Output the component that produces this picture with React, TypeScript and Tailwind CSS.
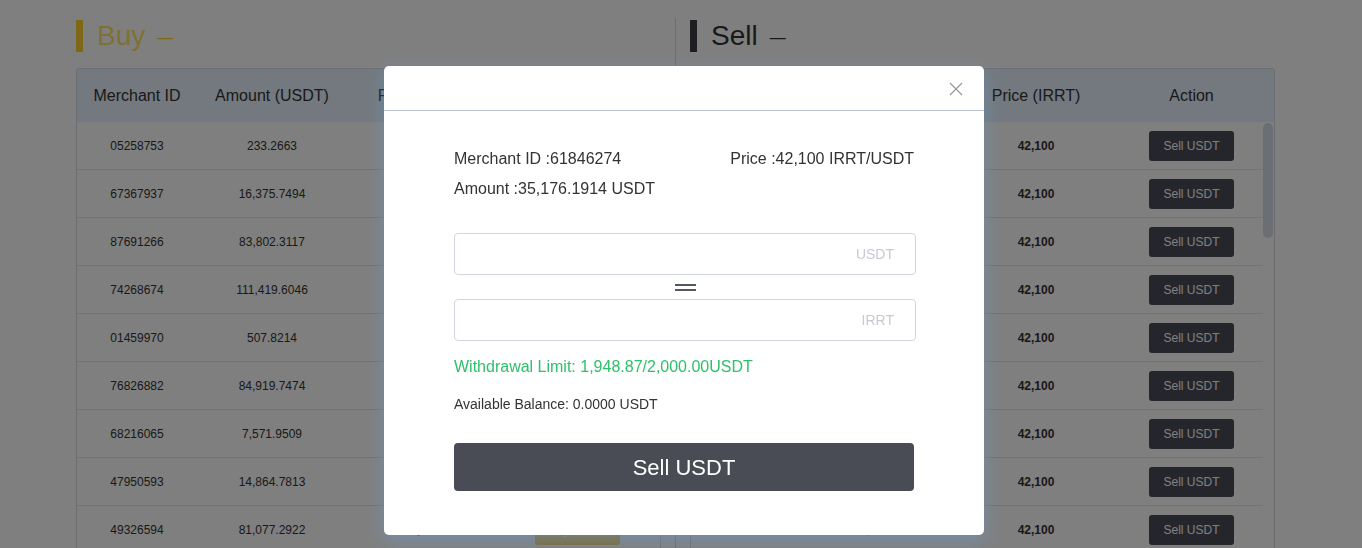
const font = { fontFamily: '"Liberation Sans", Arial, sans-serif' };

const rows = [
  ["05258753", "233.2663"],
  ["67367937", "16,375.7494"],
  ["87691266", "83,802.3117"],
  ["74268674", "111,419.6046"],
  ["01459970", "507.8214"],
  ["76826882", "84,919.7474"],
  ["68216065", "7,571.9509"],
  ["47950593", "14,864.7813"],
  ["49326594", "81,077.2922"],
];

function SideTitle({ label, tone }: { label: string; tone: "buy" | "sell" }) {
  const buy = tone === "buy";
  return (
    <div className="flex h-[68px] items-center pt-[3px]">
      <span className={`h-[32px] w-[7px] ${buy ? "bg-[#ffd12a]" : "bg-[#3c3d44]"}`} />
      <span className={`ml-[14px] text-[28px] leading-none ${buy ? "text-[#ffe35e]" : "text-[#333]"}`}>{label}</span>
      <span className={`ml-3 mt-1 text-[16px] leading-none ${buy ? "text-[#ffd12a]" : "text-[#333]"}`}>—</span>
    </div>
  );
}

function OrderTable({ tone }: { tone: "buy" | "sell" }) {
  const buy = tone === "buy";
  return (
    <div className="overflow-hidden rounded-t-[3px] border border-[#d5dde6]">
      <div className="flex h-[53px] items-center bg-[#e6f3fd] text-[16px] text-[#333]">
        <div className="w-[120px] text-center">Merchant ID</div>
        <div className="w-[150px] text-center">Amount (USDT)</div>
        <div className="w-[150px] text-center">Price (IRRT)</div>
        <div className="flex-1 pr-[2px] text-center">Action</div>
      </div>
      <div className="flex h-[500px]">
        <div className="flex-1">
          {rows.map(([id, amount]) => (
            <div key={id} className="flex h-[48px] items-center border-b border-[#e6e6e6] text-[12px] text-[#333]">
              <div className="w-[120px] text-center">{id}</div>
              <div className="w-[150px] text-center">{amount}</div>
              <div className="w-[150px] text-center font-bold">42,100</div>
              <div className="flex flex-1 justify-center pl-[9px]">
                <button
                  type="button"
                  className={`h-[30px] w-[85px] rounded-[3px] text-[12px] text-white ${buy ? "bg-[#f8d573]" : "bg-[#4a4c56]"}`}
                >
                  {buy ? "Buy USDT" : "Sell USDT"}
                </button>
              </div>
            </div>
          ))}
        </div>
        <div className="w-[11px] pt-[1px]">
          <div className="h-[115px] w-[10px] rounded-[5px] bg-[#d6dfe9]" />
        </div>
      </div>
    </div>
  );
}

function AmountField({ unit }: { unit: string }) {
  return (
    <div className="flex h-[42px] w-[462px] items-center rounded-[4px] border border-[#d2d6e0] px-[21px]">
      <input className="min-w-0 flex-1 bg-transparent text-[14px] text-[#333] outline-none" />
      <span className="text-[14px] text-[#c6cad3]">{unit}</span>
    </div>
  );
}

function CloseIcon() {
  return (
    <svg width="14" height="14" viewBox="0 0 14 14" className="text-[#999]">
      <path d="M1 1 L13 13 M13 1 L1 13" stroke="currentColor" strokeWidth="1.2" fill="none" />
    </svg>
  );
}

function SellDialog() {
  return (
    <div className="fixed inset-0 flex items-start justify-center bg-black/50 pl-[6px] pt-[66px]">
      <section
        role="dialog"
        aria-modal="true"
        className="w-[600px] rounded-[5px] bg-white shadow-[0_6px_18px_rgba(110,160,210,0.45)]"
      >
        <header className="flex h-[45px] items-center justify-end border-b border-[#b9c4d3] pr-[21px] pt-[1px]">
          <CloseIcon />
        </header>

        <div className="px-[70px] pb-[44px] pt-[33px]">
          <div className="flex justify-between text-[16px] leading-[30px] text-[#333]">
            <span>Merchant ID :61846274</span>
            <span>Price :42,100 IRRT/USDT</span>
          </div>
          <div className="text-[16px] leading-[30px] text-[#333]">Amount :35,176.1914 USDT</div>

          <div className="mt-[29px]">
            <AmountField unit="USDT" />
            <div className="flex h-[24px] flex-col items-center justify-center gap-[3px] pl-[2px]">
              <span className="h-[2px] w-[21px] bg-[#555861]" />
              <span className="h-[2px] w-[21px] bg-[#555861]" />
            </div>
            <AmountField unit="IRRT" />
          </div>

          <p className="mt-[16px] text-[16px] leading-[20px] text-[#2fc06c]">
            Withdrawal Limit: 1,948.87/2,000.00USDT
          </p>
          <p className="mt-[18px] text-[14px] leading-[18px] text-[#333]">Available Balance: 0.0000 USDT</p>

          <button
            type="button"
            className="mt-[30px] h-[48px] w-[460px] rounded-[4px] bg-[#494b55] text-[22px] text-white"
          >
            Sell USDT
          </button>
        </div>
      </section>
    </div>
  );
}

export default function App() {
  return (
    <div className="h-[548px] overflow-hidden bg-white" style={font}>
      <div className="ml-[76px] flex w-[1200px]">
        <div className="w-[585px]">
          <SideTitle label="Buy" tone="buy" />
          <OrderTable tone="buy" />
        </div>
        <div className="mx-[14px] mt-[18px] w-px bg-[#d9d9d9]" />
        <div className="w-[585px]">
          <SideTitle label="Sell" tone="sell" />
          <OrderTable tone="sell" />
        </div>
      </div>
      <SellDialog />
    </div>
  );
}
